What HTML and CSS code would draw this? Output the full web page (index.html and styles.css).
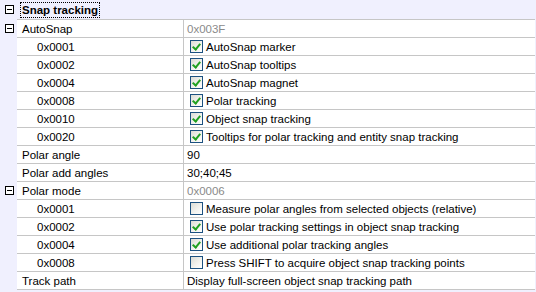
FILE: index.html
```html
<!DOCTYPE html>
<html>
<head>
<meta charset="utf-8">
<link rel="stylesheet" href="styles.css">
</head>
<body>
<div class="grid">
  <div class="row cat">
    <div class="gut"><span class="exp"></span></div>
    <div class="cattext"><span class="focus">Snap tracking</span></div>
  </div>
  <div class="row">
    <div class="gut"><span class="exp"></span></div>
    <div class="name">AutoSnap</div>
    <div class="val dis">0x003F</div>
  </div>
  <div class="row"><div class="gut"></div><div class="name sub">0x0001</div><div class="val"><span class="cb on"></span>AutoSnap marker</div></div>
  <div class="row"><div class="gut"></div><div class="name sub">0x0002</div><div class="val"><span class="cb on"></span>AutoSnap tooltips</div></div>
  <div class="row"><div class="gut"></div><div class="name sub">0x0004</div><div class="val"><span class="cb on"></span>AutoSnap magnet</div></div>
  <div class="row"><div class="gut"></div><div class="name sub">0x0008</div><div class="val"><span class="cb on"></span>Polar tracking</div></div>
  <div class="row"><div class="gut"></div><div class="name sub">0x0010</div><div class="val"><span class="cb on"></span>Object snap tracking</div></div>
  <div class="row"><div class="gut"></div><div class="name sub">0x0020</div><div class="val"><span class="cb on"></span>Tooltips for polar tracking and entity snap tracking</div></div>
  <div class="row"><div class="gut"></div><div class="name">Polar angle</div><div class="val txt">90</div></div>
  <div class="row"><div class="gut"></div><div class="name">Polar add angles</div><div class="val txt">30;40;45</div></div>
  <div class="row">
    <div class="gut"><span class="exp"></span></div>
    <div class="name">Polar mode</div>
    <div class="val dis">0x0006</div>
  </div>
  <div class="row"><div class="gut"></div><div class="name sub">0x0001</div><div class="val"><span class="cb"></span>Measure polar angles from selected objects (relative)</div></div>
  <div class="row"><div class="gut"></div><div class="name sub">0x0002</div><div class="val"><span class="cb on"></span>Use polar tracking settings in object snap tracking</div></div>
  <div class="row"><div class="gut"></div><div class="name sub">0x0004</div><div class="val"><span class="cb on"></span>Use additional polar tracking angles</div></div>
  <div class="row"><div class="gut"></div><div class="name sub">0x0008</div><div class="val"><span class="cb"></span>Press SHIFT to acquire object snap tracking points</div></div>
  <div class="row"><div class="gut"></div><div class="name">Track path</div><div class="val txt">Display full-screen object snap tracking path</div></div>
</div>
</body>
</html>
```
FILE: styles.css
```css
html, body {
  margin: 0;
  padding: 0;
  background: #f0f0fe;
}
body {
  width: 536px;
  height: 292px;
  overflow: hidden;
  font-family: "Liberation Sans", Arial, sans-serif;
  font-size: 11.5px;
  color: #000;
}
.grid {
  display: flex;
  flex-direction: column;
  width: 535px;
}
.row {
  display: grid;
  grid-template-columns: 17px 167px 1fr;
  height: 18px;
}
.row.cat {
  height: 20px;
  grid-template-columns: 17px 1fr;
}
.gut {
  background: #f0f0fe;
  position: relative;
}
.exp {
  position: absolute;
  left: 5px;
  top: 4px;
  width: 7px;
  height: 7px;
  border: 1px solid #000;
  background: #fff;
}
.exp::after {
  content: "";
  position: absolute;
  left: 1px;
  top: 3px;
  width: 5px;
  height: 1px;
  background: #000;
}
.row.cat .exp { top: 5px; }
.cattext {
  display: flex;
  align-items: center;
  border-bottom: 1px solid #c6c6c6;
  margin-left: -17px;
  padding-left: 20px;
}
.row.cat .gut { z-index: 1; }
.focus {
  font-weight: bold;
  border: 1px dotted #000;
  padding: 1px;
  line-height: 12px;
}
.name, .val {
  background: #fff;
  border-bottom: 1px solid #c6c6c6;
  display: flex;
  align-items: center;
  white-space: nowrap;
  overflow: hidden;
}
.name {
  padding-left: 5px;
  border-right: 1px solid #c6c6c6;
}
.name.sub { padding-left: 20px; }
.val { padding-left: 6px; }
.val.txt, .val.dis { padding-left: 3px; }
.dis { color: #8a8a8a; }
.cb {
  width: 11px;
  height: 11px;
  border: 1px solid #1c5180;
  background: linear-gradient(135deg, #dcdcd5 0%, #f4f4f0 60%, #ffffff 100%);
  margin-right: 3px;
  flex: none;
  position: relative;
}
.cb.on::after {
  content: "";
  position: absolute;
  left: 3px;
  top: 1px;
  width: 3px;
  height: 6px;
  border-right: 2px solid #21a121;
  border-bottom: 2px solid #21a121;
  transform: rotate(40deg);
}
```
